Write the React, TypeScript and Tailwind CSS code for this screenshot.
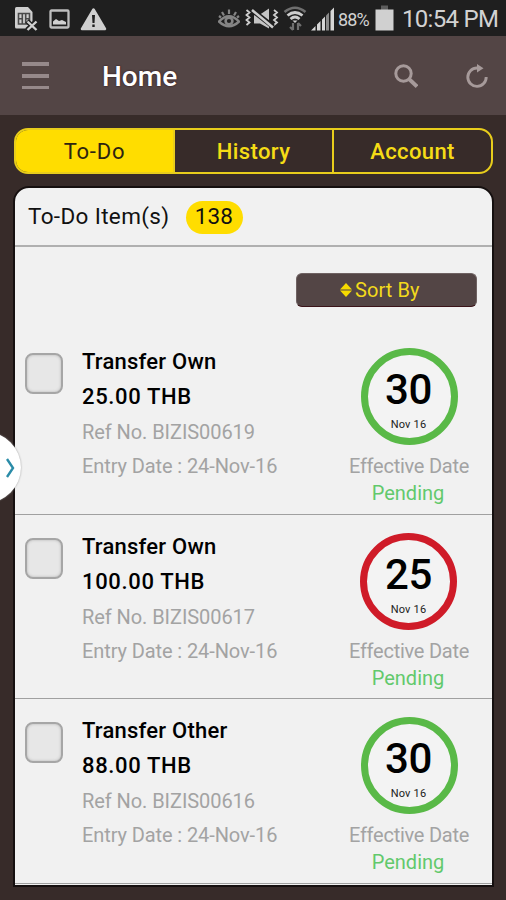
import React, { useState } from 'react'
import { clsx } from 'clsx'

interface TodoItem {
  title: string
  amount: string
  refNo: string
  entryDate: string
  day: string
  month: string
  overdue: boolean
}

const items: TodoItem[] = [
  { title: 'Transfer Own', amount: '25.00 THB', refNo: 'BIZIS00619', entryDate: '24-Nov-16', day: '30', month: 'Nov 16', overdue: false },
  { title: 'Transfer Own', amount: '100.00 THB', refNo: 'BIZIS00617', entryDate: '24-Nov-16', day: '25', month: 'Nov 16', overdue: true },
  { title: 'Transfer Other', amount: '88.00 THB', refNo: 'BIZIS00616', entryDate: '24-Nov-16', day: '30', month: 'Nov 16', overdue: false },
]

const StatusBar: React.FC = () => (
  <div className="flex h-9 shrink-0 items-center bg-[#1f1f1f] text-[#d2d2d2]">
    <svg className="ml-[14px] shrink-0" width="25" height="26" viewBox="0 0 25 26">
      <path d="M1 3.500Q1 2 2.500 2H14L18.500 7V17L14 23.500H2.500Q1 23.500 1 22Z" fill="#cfcfcf" />
      <path d="M4.500 8.500H15.500V19H4.500ZM5 13.700H8M11.500 13.700H15M8.300 8.500V19M11.700 8.500V19" fill="none" stroke="#4a4a4a" strokeWidth="1.600" />
      <path d="M13 16L22.500 25M22.500 16L13 25" stroke="#1f1f1f" strokeWidth="5" />
      <path d="M13.500 16.500L22.500 25M22.500 16.500L13.500 25" stroke="#cfcfcf" strokeWidth="2.400" />
    </svg>
    <svg className="ml-[10px] mt-[1px] shrink-0" width="21" height="20" viewBox="0 0 21 20">
      <rect x="1.500" y="1.500" width="18" height="17" rx="1" fill="none" stroke="#bdbdbd" strokeWidth="2.300" />
      <path d="M4 15.500V12.500L7 10L10 12L13 11L17 13V15.500Z" fill="#d0d0d0" />
    </svg>
    <svg className="ml-[10px] mt-[1px] shrink-0" width="27" height="24" viewBox="0 0 27 24">
      <path d="M13.500 2.500L25 22H2Z" fill="#cfcfcf" stroke="#cfcfcf" strokeWidth="2.500" strokeLinejoin="round" />
      <path d="M12 8H15L14.500 16H12.500ZM12.300 17.500H14.700V20H12.300Z" fill="#1f1f1f" />
    </svg>

    <svg className="ml-[111px] mt-[2px] shrink-0" width="22" height="20" viewBox="0 0 22 20" fill="none" stroke="#858585">
      <path d="M1 12.500Q11 2 21 12.500Q11 22 1 12.500Z" strokeWidth="2.500" />
      <circle cx="11" cy="12" r="3.400" strokeWidth="2.600" />
      <path d="M11 0.500V5M4 3L6 6.500M18 3L16 6.500M1 7L3 8.500M21 7L19 8.500" strokeWidth="2.200" />
    </svg>
    <svg className="ml-[5px] mt-[1px] shrink-0" width="34" height="22" viewBox="0 0 34 22">
      <path d="M9 6.500H15L24 0.500V20.500L15 15.500H9Z" fill="#c4c4c4" />
      <path d="M1.500 2L4.500 4.500L1.500 7L4.500 9.500L1.500 12L4.500 14.500L1.500 17M29 2L32 4.500L29 7L32 9.500L29 12L32 14.500L29 17" fill="none" stroke="#cdcdcd" strokeWidth="1.800" />
      <path d="M7.500 2.500L28 18.500" stroke="#1f1f1f" strokeWidth="5" />
      <path d="M7 2L28 19.500" stroke="#cdcdcd" strokeWidth="2.600" />
    </svg>
    <svg className="ml-[4px] mt-[1px] shrink-0" width="24" height="25" viewBox="0 0 24 25" fill="none">
      <path d="M1.500 6Q12 -2.500 22.500 6" stroke="#6f6f6f" strokeWidth="2.600" />
      <path d="M4.500 9.500Q12 3.500 19.500 9.500" stroke="#cdcdcd" strokeWidth="2.800" />
      <path d="M7.500 13Q12 9 16.500 13" stroke="#cdcdcd" strokeWidth="2.800" />
      <path d="M12 17L9.500 14.500H14.500Z" fill="#cdcdcd" />
      <path d="M10 17V24M7 21L10 24M15 24V17M18 20L15 17" stroke="#6f6f6f" strokeWidth="2.200" />
    </svg>
    <svg className="ml-[4px] mt-[1px] shrink-0" width="24" height="24" viewBox="0 0 24 24" fill="#d6d6d6">
      <path d="M0 23.500L4.500 19V23.500ZM6 17.500L9.500 14V23.500H6ZM11 12.500L14 9.500V23.500H11Z" />
      <path d="M15 8.500L18 5.500V23.500H15Z" fill="#8a8a8a" />
      <path d="M19.500 4L23 0.500V23.500H19.500Z" />
    </svg>
    <span className="ml-[3px] mt-[3px] w-[33px] whitespace-nowrap text-[18px] tracking-[-0.900px]">88%</span>
    <svg className="ml-[4px] shrink-0" width="19" height="26" viewBox="0 0 19 26">
      <path d="M6 0.500H13V5H6Z" fill="#5c5c5c" />
      <path d="M0.500 4.500H18.500V25.500H0.500Z" fill="#d0d0d0" />
    </svg>
    <span className="ml-[8px] mt-[1px] whitespace-nowrap text-[24px] leading-9 tracking-[-0.700px]">10:54 PM</span>
  </div>
)

const AppBar: React.FC = () => (
  <header className="flex h-[79px] shrink-0 items-center bg-[#534545]">
    <div className="ml-[22px] flex w-[27px] flex-col gap-[8px]">
      <span className="h-[4px] bg-[#96898a]" />
      <span className="h-[4px] bg-[#96898a]" />
      <span className="h-[3px] bg-[#96898a]" />
    </div>
    <h1 className="ml-[53px] mt-[3px] text-[28px] font-medium leading-9 text-white [text-shadow:0_0_2px_#2a0a10]">Home</h1>
    <div className="ml-auto mr-[17px] flex items-center gap-[48px]">
      <svg width="24" height="24" viewBox="0 0 24 24" fill="none" stroke="#a69a9a" strokeWidth="3">
        <circle cx="9.500" cy="9.500" r="7.700" />
        <path d="M15 15L23 22.500" strokeWidth="3.800" />
      </svg>
      <svg width="23" height="24" viewBox="0 0 23 24">
        <path d="M12 4H11A9.200 9.200 0 1 0 20.200 13" fill="none" stroke="#a69a9a" strokeWidth="2.900" />
        <path d="M11 0L17.500 4.300L11 8.500Z" fill="#a69a9a" />
      </svg>
    </div>
  </header>
)

const DateRing: React.FC<{ item: TodoItem }> = ({ item }) => (
  <div
    className={clsx(
      'flex size-[97px] flex-col items-center rounded-full border-[7px] bg-[#f3f3f3]',
      item.overdue ? 'mr-[1px] border-[#cf1b28]' : 'ml-[1px] border-[#59b947] pr-[2px]'
    )}
  >
    <span className="mt-[14px] text-[42px] font-medium leading-[42px] tracking-[-0.300px] text-black">{item.day}</span>
    <span className="mt-[7px] text-[11px] leading-[14px] tracking-[0.200px] text-[#222]">{item.month}</span>
  </div>
)

const TodoRow: React.FC<{ item: TodoItem }> = ({ item }) => {
  const [checked, setChecked] = useState(false)

  return (
    <li className="flex h-[184.700px] border-b-[1.500px] border-[#a0a0a0] pt-[15px]">
      <button
        aria-pressed={checked}
        onClick={() => setChecked(!checked)}
        className={clsx(
          'ml-[10px] mt-[8px] h-[41px] w-[38px] shrink-0 rounded-[8px] border-2 border-[#a6a6a6] shadow-[inset_0_0_3px_#b5b5b5]',
          checked ? 'bg-[#ffde00]' : 'bg-[#e7e7e7]'
        )}
      />
      <div className="ml-[19px] whitespace-nowrap">
        <p className="text-[22px] font-medium leading-[34px] tracking-[0.230px] text-black">{item.title}</p>
        <p className="mt-[1px] text-[22px] font-medium leading-[34px] tracking-[0.650px] text-black">{item.amount}</p>
        <p className="mt-[1px] text-[20px] leading-[34px] tracking-[-0.070px] text-[#a3a3a3]">Ref No. {item.refNo}</p>
        <p className="text-[20px] leading-[34px] tracking-[-0.100px] text-[#a3a3a3]">Entry Date : {item.entryDate}</p>
      </div>
      <div className="ml-auto mr-[12px] mt-[3px] flex w-[142px] flex-col items-center whitespace-nowrap">
        <DateRing item={item} />
        <p className="mt-[8px] text-[20px] leading-[27px] tracking-[-0.250px] text-[#a3a3a3]">Effective Date</p>
        <p className="pr-[2px] text-[20px] leading-[27px] text-[#62c96c]">Pending</p>
      </div>
    </li>
  )
}

const tabs = ['To-Do', 'History', 'Account']

const App: React.FC = () => {
  const [activeTab, setActiveTab] = useState('To-Do')

  return (
    <div className="relative flex h-[900px] w-[506px] flex-col overflow-hidden bg-[#372b29] font-['Roboto',sans-serif]">
      <StatusBar />
      <AppBar />

      <nav className="ml-[14px] mr-[13px] mt-[13px] flex h-[46px] shrink-0 overflow-hidden rounded-[14px] border-2 border-[#e8cd1c]">
        {tabs.map((tab, i) => (
          <button
            key={tab}
            onClick={() => setActiveTab(tab)}
            className={clsx(
              'flex-1 pt-[1px] text-[22px]',
              i > 0 && 'border-l-2 border-[#e8cd1c]',
              activeTab === tab
                ? 'bg-[#ffdd00] tracking-[0.800px] text-[#2d2410]'
                : 'font-medium tracking-[0.400px] text-[#f5dc16]'
            )}
          >
            {tab}
          </button>
        ))}
      </nav>

      <main className="ml-[13px] mr-[12px] mt-[12px] flex h-[701px] shrink-0 flex-col overflow-hidden rounded-t-[16px] border-2 border-[#161010] bg-[#f1f1f1]">
        <div className="flex h-[59px] shrink-0 items-center border-b-2 border-[#b0b0b0] pl-[13px] pt-[1px]">
          <h2 className="text-[22.500px] tracking-[0.350px] text-[#111]">To-Do Item(s)</h2>
          <span className="ml-[17px] flex h-[33px] w-[57px] items-center justify-center rounded-full bg-[#ffdd00] pr-[2px] text-[22.500px] tracking-[0.200px] text-[#111]">138</span>
        </div>
        <div className="flex h-[83px] shrink-0 justify-end pr-[15px] pt-[26px]">
          <button className="flex h-[34px] w-[181px] items-center rounded-[6px] border border-[#6f6262] border-b-[#3b1419] bg-[#534545] pl-[43px] text-[20px] tracking-[0.100px] text-[#f2d91c]">
            <svg className="mr-[3px]" width="12" height="14" viewBox="0 0 12 14" fill="#f6da00">
              <path d="M6 0L12 6.400H0ZM0 7.600H12L6 14Z" />
            </svg>
            Sort By
          </button>
        </div>
        <ul>
          {items.map((item) => (
            <TodoRow key={item.refNo} item={item} />
          ))}
        </ul>
      </main>

      {/* drawer handle */}
      <button className="absolute left-[-50px] top-[432px] flex size-[71px] items-center justify-end rounded-full bg-white pr-[6px] shadow-[0_0_2px_#999]">
        <svg width="9" height="20" viewBox="0 0 9 20" fill="none" stroke="#2b8ca8" strokeWidth="2.400">
          <path d="M1 1L7 10L1 19" />
        </svg>
      </button>
    </div>
  )
}

export default App
